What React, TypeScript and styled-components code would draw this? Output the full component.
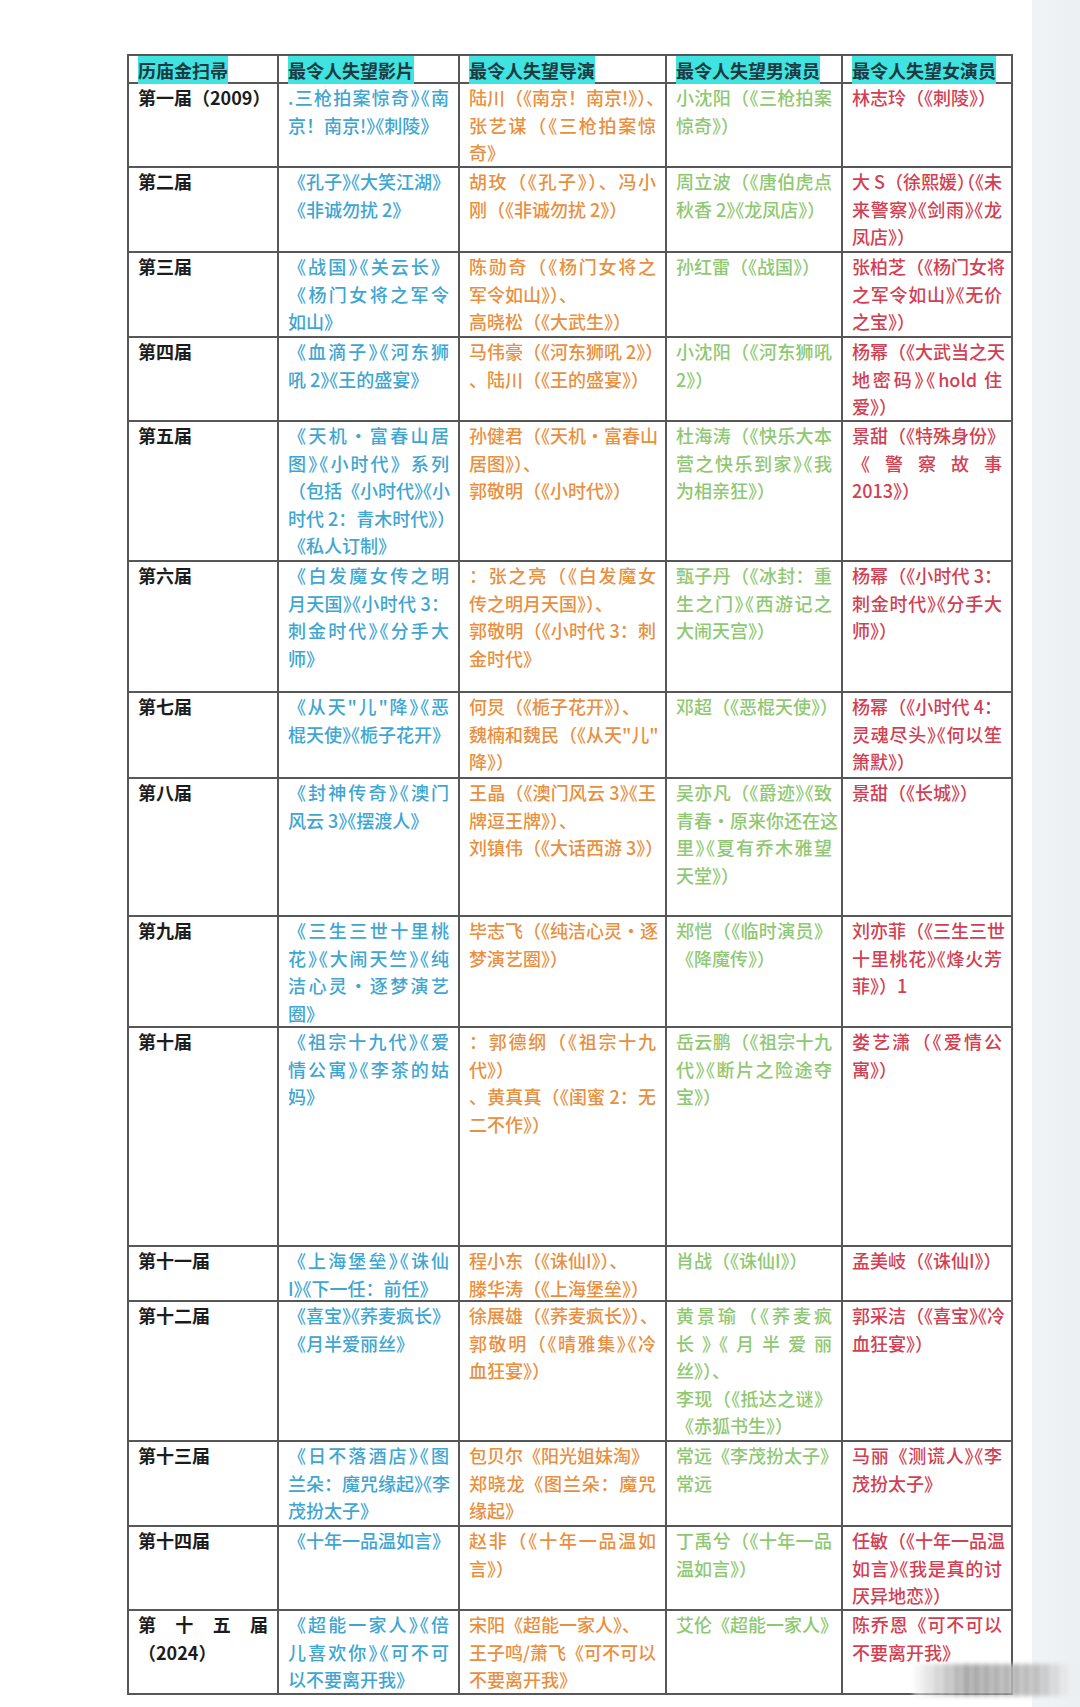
import { FC, useLayoutEffect, useRef, useState } from 'react';
import styled, { createGlobalStyle } from 'styled-components';

type Tone = 'head' | 'blue' | 'orange' | 'green' | 'red';

// "|" = soft wrap (line is justified), "\n" = hard break
const HEADERS = ['历庙金扫帚', '最令人失望影片', '最令人失望导演', '最令人失望男演员', '最令人失望女演员'];

const ROWS: { height: number; cells: string[] }[] = [
  {
    height: 82,
    cells: [
      '第一届（2009）',
      '.三枪拍案惊奇》《南|京！南京!》《刺陵》',
      '陆川（《南京！南京!》）、|张艺谋（《三枪拍案惊|奇》',
      '小沈阳（《三枪拍案|惊奇》）',
      '林志玲（《刺陵》）',
    ],
  },
  {
    height: 83,
    cells: [
      '第二届',
      '《孔子》《大笑江湖》|《非诚勿扰 2》',
      '胡玫（《孔子》）、冯小|刚（《非诚勿扰 2》）',
      '周立波（《唐伯虎点|秋香 2》《龙凤店》）',
      '大 S（徐熙媛）（《未|来警察》《剑雨》《龙|凤店》）',
    ],
  },
  {
    height: 83,
    cells: [
      '第三届',
      '《战国》《关云长》|《杨门女将之军令|如山》',
      '陈勋奇（《杨门女将之|军令如山》）、\n高晓松（《大武生》）',
      '孙红雷（《战国》）',
      '张柏芝（《杨门女将|之军令如山》《无价|之宝》）',
    ],
  },
  {
    height: 82,
    cells: [
      '第四届',
      '《血滴子》《河东狮|吼 2》《王的盛宴》',
      '马伟豪（《河东狮吼 2》）|、陆川（《王的盛宴》）',
      '小沈阳（《河东狮吼|2》）',
      '杨幂（《大武当之天|地密码》《hold 住|爱》）',
    ],
  },
  {
    height: 138,
    cells: [
      '第五届',
      '《天机·富春山居|图》《小时代》系列|（包括《小时代》《小|时代 2：青木时代》）\n《私人订制》',
      '孙健君（《天机·富春山|居图》）、\n郭敬明（《小时代》）',
      '杜海涛（《快乐大本|营之快乐到家》《我|为相亲狂》）',
      '景甜（《特殊身份》|《警察故事|2013》）',
    ],
  },
  {
    height: 129,
    cells: [
      '第六届',
      '《白发魔女传之明|月天国》《小时代 3：|刺金时代》《分手大|师》',
      '：张之亮（《白发魔女|传之明月天国》）、\n郭敬明（《小时代 3：刺|金时代》',
      '甄子丹（《冰封：重|生之门》《西游记之|大闹天宫》）',
      '杨幂（《小时代 3：|刺金时代》《分手大|师》）',
    ],
  },
  {
    height: 84,
    cells: [
      '第七届',
      '《从天"儿"降》《恶|棍天使》《栀子花开》',
      '何炅（《栀子花开》）、\n魏楠和魏民（《从天"儿"|降》）',
      '邓超（《恶棍天使》）',
      '杨幂（《小时代 4：|灵魂尽头》《何以笙|箫默》）',
    ],
  },
  {
    height: 136,
    cells: [
      '第八届',
      '《封神传奇》《澳门|风云 3》《摆渡人》',
      '王晶（《澳门风云 3》《王|牌逗王牌》）、\n刘镇伟（《大话西游 3》）',
      '吴亦凡（《爵迹》《致|青春·原来你还在这|里》《夏有乔木雅望|天堂》）',
      '景甜（《长城》）',
    ],
  },
  {
    height: 109,
    cells: [
      '第九届',
      '《三生三世十里桃|花》《大闹天竺》《纯|洁心灵·逐梦演艺|圈》',
      '毕志飞（《纯洁心灵·逐|梦演艺圈》）',
      '郑恺（《临时演员》|《降魔传》）',
      '刘亦菲（《三生三世|十里桃花》《烽火芳|菲》）1',
    ],
  },
  {
    height: 217,
    cells: [
      '第十届',
      '《祖宗十九代》《爱|情公寓》《李茶的姑|妈》',
      '：郭德纲（《祖宗十九|代》）\n、黄真真（《闺蜜 2：无|二不作》）',
      '岳云鹏（《祖宗十九|代》《断片之险途夺|宝》）',
      '娄艺潇（《爱情公|寓》）',
    ],
  },
  {
    height: 53,
    cells: [
      '第十一届',
      '《上海堡垒》《诛仙|I》《下一任：前任》',
      '程小东（《诛仙I》）、\n滕华涛（《上海堡垒》）',
      '肖战（《诛仙I》）',
      '孟美岐（《诛仙I》）',
    ],
  },
  {
    height: 138,
    cells: [
      '第十二届',
      '《喜宝》《荞麦疯长》|《月半爱丽丝》',
      '徐展雄（《荞麦疯长》）、\n郭敬明（《晴雅集》《冷|血狂宴》）',
      '黄景瑜（《荞麦疯|长》《月半爱丽|丝》）、\n李现（《抵达之谜》|《赤狐书生》）',
      '郭采洁（《喜宝》《冷|血狂宴》）',
    ],
  },
  {
    height: 83,
    cells: [
      '第十三届',
      '《日不落酒店》《图|兰朵：魔咒缘起》《李|茂扮太子》',
      '包贝尔《阳光姐妹淘》\n郑晓龙《图兰朵：魔咒|缘起》',
      '常远《李茂扮太子》\n常远',
      '马丽《测谎人》《李|茂扮太子》',
    ],
  },
  {
    height: 82,
    cells: [
      '第十四届',
      '《十年一品温如言》',
      '赵非（《十年一品温如|言》）',
      '丁禹兮（《十年一品|温如言》）',
      '任敏（《十年一品温|如言》《我是真的讨|厌异地恋》）',
    ],
  },
  {
    height: 82,
    cells: [
      '第十五届|（2024）',
      '《超能一家人》《倍|儿喜欢你》《可不可|以不要离开我》',
      '宋阳《超能一家人》、\n王子鸣/萧飞《可不可以|不要离开我》',
      '艾伦《超能一家人》',
      '陈乔恩《可不可以|不要离开我》',
    ],
  },
];

const TONES: Tone[] = ['head', 'blue', 'orange', 'green', 'red'];

const COLORS: Record<Tone, string> = {
  head: '#1c1c1c',
  blue: '#3ea6d1',
  orange: '#e8903f',
  green: '#8fc872',
  red: '#d23f52',
};

const OPEN = '（《「';
const CLOSE = '）》」、，。：！';
const PUNCT = OPEN + CLOSE;

// split a cell into lines, remembering which ones are soft-wrapped
const toLines = (text: string) => {
  const lines: { text: string; justify: boolean }[] = [];
  let current = '';
  for (const ch of text) {
    if (ch === '|' || ch === '\n') {
      lines.push({ text: current, justify: ch === '|' });
      current = '';
    } else {
      current += ch;
    }
  }
  lines.push({ text: current, justify: false });
  return lines;
};

// adjacent CJK brackets are set half width, like the phone app does
const toRuns = (text: string) => {
  const chars = Array.from(text);
  const runs: { text: string; half: boolean }[] = [];
  chars.forEach((ch, i) => {
    const prev = chars[i - 1] ?? '';
    const next = chars[i + 1] ?? '';
    const half =
      (OPEN.includes(ch) && prev !== '' && PUNCT.includes(prev)) ||
      (CLOSE.includes(ch) && next !== '' && PUNCT.includes(next));
    const last = runs[runs.length - 1];
    if (last && last.half === half) last.text += ch;
    else runs.push({ text: ch, half });
  });
  return runs;
};

const Line: FC<{ text: string; justify: boolean }> = ({ text, justify }) => {
  const ref = useRef<HTMLSpanElement>(null);
  const [spacing, setSpacing] = useState(0);

  useLayoutEffect(() => {
    const fit = () => {
      const el = ref.current;
      if (!el) return;
      el.style.letterSpacing = '0px';
      const over = el.scrollWidth - el.clientWidth;
      setSpacing(over > 0 ? -(over + 1) / Array.from(text).length : 0);
      el.style.letterSpacing = '';
    };
    fit();
    document.fonts?.ready.then(fit);
  }, [text]);

  return (
    <S.Line ref={ref} $justify={justify} style={spacing ? { letterSpacing: `${spacing}px` } : undefined}>
      {toRuns(text).map((run, i) => (run.half ? <S.Half key={i}>{run.text}</S.Half> : run.text))}
    </S.Line>
  );
};

const App: FC = () => {
  const rowHeights = [26, ...ROWS.map((row) => row.height)];

  return (
    <>
      <GlobalStyle />
      <S.Page>
        <S.Main>
          <S.Table style={{ gridTemplateRows: rowHeights.map((h) => `${h}px`).join(' ') }}>
            {HEADERS.map((title) => (
              <S.HeadCell key={title}>
                <S.Mark>{title}</S.Mark>
              </S.HeadCell>
            ))}
            {ROWS.map((row, r) =>
              row.cells.map((text, c) => (
                <S.Cell key={`${r}-${c}`} $tone={TONES[c]}>
                  {toLines(text).map((line, i) => (
                    <Line key={i} text={line.text} justify={line.justify} />
                  ))}
                </S.Cell>
              )),
            )}
          </S.Table>
        </S.Main>
        <S.Side />
        <S.Watermark />
      </S.Page>
    </>
  );
};

const GlobalStyle = createGlobalStyle`
  body {
    margin: 0;
    background: #fff;
    font-family: "Noto Sans CJK SC", "Noto Sans", sans-serif;
  }
`;

const S = {
  Page: styled.div`
    position: relative;
    display: flex;
    width: 1080px;
    min-height: 1707px;
    background: #fff;
  `,
  Main: styled.main`
    flex: 1;
    padding: 54px 0 0 127px;
  `,
  Side: styled.aside`
    width: 48px;
    background: linear-gradient(90deg, #f1f4f6, #eceff2);
  `,
  Table: styled.div`
    display: grid;
    grid-template-columns: 148px 179px 205px 174px 168px;
    gap: 2px;
    width: fit-content;
    background: #575757;
    border: 2px solid #575757;
  `,
  HeadCell: styled.div`
    background: #fff;
    padding: 2px 9px 0;
    font-size: 18px;
    font-weight: 700;
    line-height: 24px;
    color: #1d3a40;
    white-space: nowrap;
  `,
  Mark: styled.span`
    background: #3fe3e0;
    padding: 1px 0;
  `,
  Cell: styled.div<{ $tone: Tone }>`
    background: #fff;
    padding: 0 9px;
    overflow: hidden;
    font-size: 18px;
    line-height: 27.6px;
    font-weight: ${(p) => (p.$tone === 'head' ? 700 : 500)};
    color: ${(p) => COLORS[p.$tone]};
  `,
  Line: styled.span<{ $justify: boolean }>`
    display: block;
    white-space: nowrap;
    text-align: justify;
    text-align-last: ${(p) => (p.$justify ? 'justify' : 'auto')};
  `,
  Half: styled.span`
    font-feature-settings: "halt";
  `,
  Watermark: styled.div`
    position: absolute;
    left: 913px;
    top: 1664px;
    width: 156px;
    height: 32px;
    background:
      repeating-linear-gradient(90deg, rgba(255, 255, 255, 0) 0 7px, rgba(255, 255, 255, 0.35) 7px 10px),
      linear-gradient(90deg, rgba(250, 250, 250, 0.6), rgba(150, 150, 150, 0.85) 35%, rgba(175, 175, 175, 0.8) 80%, rgba(230, 230, 230, 0.5));
    filter: blur(2px);
  `,
};

export default App;
